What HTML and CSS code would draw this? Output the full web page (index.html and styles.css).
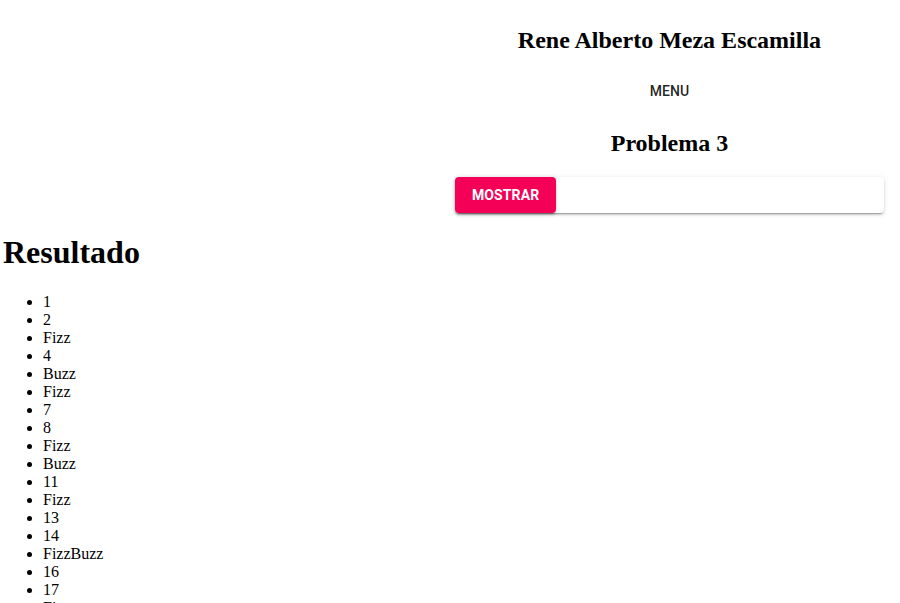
FILE: index.html
```html
<!DOCTYPE html>
<html lang="es">
<head>
<meta charset="utf-8">
<title>Problema 3</title>
<link rel="stylesheet" href="styles.css">
</head>
<body>
<div class="top">
  <div class="spacer"></div>
  <div class="panel">
    <h2 class="name">Rene Alberto Meza Escamilla</h2>
    <button class="menu-btn" type="button">Menu</button>
    <h2 class="title">Problema 3</h2>
    <div class="card">
      <button class="btn-mostrar" type="button">Mostrar</button>
    </div>
  </div>
</div>
<main class="result">
  <h1>Resultado</h1>
  <ul class="list">
    <li>1</li><li>2</li><li>Fizz</li><li>4</li><li>Buzz</li><li>Fizz</li><li>7</li><li>8</li><li>Fizz</li><li>Buzz</li>
    <li>11</li><li>Fizz</li><li>13</li><li>14</li><li>FizzBuzz</li><li>16</li><li>17</li><li>Fizz</li><li>19</li><li>Buzz</li>
    <li>Fizz</li><li>22</li><li>23</li><li>Fizz</li><li>Buzz</li><li>26</li><li>Fizz</li><li>28</li><li>29</li><li>FizzBuzz</li>
  </ul>
</main>
</body>
</html>
```

FILE: styles.css
```css
html, body {
  margin: 0;
  background: #fff;
  font-family: "Liberation Serif", "Times New Roman", serif;
  color: #000;
}

.top {
  display: grid;
  grid-template-columns: 455px 429px;
}

.panel {
  display: flex;
  flex-direction: column;
  align-items: center;
  text-align: center;
}

.name {
  font-size: 24px;
  font-weight: bold;
  margin: 27px 0 0;
}

.menu-btn {
  margin-top: 19px;
  height: 36px;
  padding: 0 16px;
  border: none;
  background: transparent;
  font-family: Roboto, "Liberation Sans", sans-serif;
  font-weight: 500;
  font-size: 14px;
  letter-spacing: 0.1px;
  text-transform: uppercase;
  color: rgba(0, 0, 0, 0.87);
}

.title {
  font-size: 24px;
  font-weight: bold;
  margin: 21px 0 19.5px;
}

.card {
  align-self: stretch;
  display: flex;
  height: 36px;
  border-radius: 4px;
  background: #fff;
  box-shadow: 0 3px 1px -2px rgba(0,0,0,.2), 0 2px 2px 0 rgba(0,0,0,.14), 0 1px 5px 0 rgba(0,0,0,.12);
}

.btn-mostrar {
  height: 36px;
  padding: 0 17px;
  border: none;
  border-radius: 4px;
  background: #f50057;
  color: #fff;
  font-family: Roboto, "Liberation Sans", sans-serif;
  font-weight: 700;
  font-size: 14px;
  letter-spacing: 0.1px;
  text-transform: uppercase;
  box-shadow: 0 3px 1px -2px rgba(0,0,0,.2), 0 2px 2px 0 rgba(0,0,0,.14), 0 1px 5px 0 rgba(0,0,0,.12);
}

.result {
  padding-left: 3px;
}

.result h1 {
  font-size: 32px;
  font-weight: bold;
  margin: 21.44px 0;
}

.list {
  margin: 0;
  padding: 1px 0 0 40px;
}

.list li {
  font-size: 16px;
  line-height: 18px;
}
```
